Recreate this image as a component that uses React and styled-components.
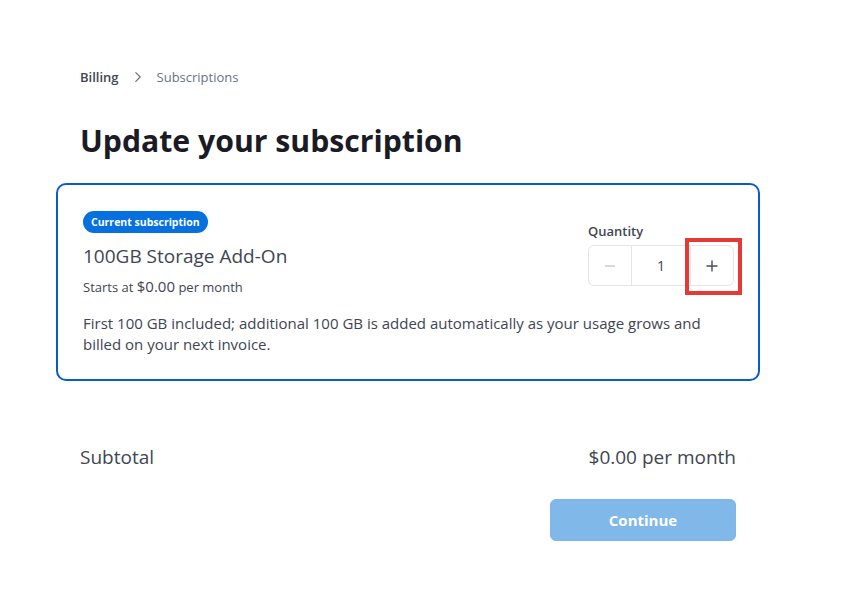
import React from "react";
import styled, { createGlobalStyle } from "styled-components";

const GlobalStyle = createGlobalStyle`
  body {
    margin: 0;
    background: #ffffff;
    font-family: "Open Sans", "Noto Sans", sans-serif;
    color: #30313d;
  }
`;

const App = () => {
  return (
    <>
      <GlobalStyle />
      <Page>
        <Breadcrumbs>
          <Crumb $active>Billing</Crumb>
          <Chevron viewBox="0 0 16 16">
            <path d="M5.5 3l5 5-5 5" fill="none" stroke="#6b7280" strokeWidth="1.4" strokeLinecap="round" strokeLinejoin="round" />
          </Chevron>
          <Crumb>Subscriptions</Crumb>
        </Breadcrumbs>
        <Title>Update your subscription</Title>
        <Card>
          <CardMain>
            <Badge>Current subscription</Badge>
            <PlanName>100GB Storage Add-On</PlanName>
            <Price>
              Starts at <Amount>$0.00</Amount> per month
            </Price>
          </CardMain>
          <QuantityBox>
            <QuantityLabel>Quantity</QuantityLabel>
            <Stepper>
              <StepButton disabled>
                <svg width="14" height="14" viewBox="0 0 14 14">
                  <path d="M2 7h10" stroke="#c4c7ce" strokeWidth="1.4" />
                </svg>
              </StepButton>
              <StepValue>1</StepValue>
              <StepButton $last>
                <svg width="14" height="14" viewBox="0 0 14 14">
                  <path d="M1.5 7h11M7 1.5v11" stroke="#4a4d5a" strokeWidth="1.4" />
                </svg>
                <Highlight />
              </StepButton>
            </Stepper>
          </QuantityBox>
          <Description>
            First 100 GB included; additional 100 GB is added automatically as your usage grows and
            billed on your next invoice.
          </Description>
        </Card>
        <SubtotalRow>
          <span>Subtotal</span>
          <span>$0.00 per month</span>
        </SubtotalRow>
        <Actions>
          <ContinueButton disabled>Continue</ContinueButton>
        </Actions>
      </Page>
    </>
  );
};

export default App;

const Page = styled.div`
  width: 656px;
  padding: 66px 0 0 80px;
`;

const Breadcrumbs = styled.nav`
  display: flex;
  align-items: center;
  gap: 12px;
  height: 22px;
`;

const Crumb = styled.span`
  font-size: 13px;
  font-weight: ${(p) => (p.$active ? 600 : 400)};
  color: ${(p) => (p.$active ? "#414552" : "#687385")};
`;

const Chevron = styled.svg`
  width: 14px;
  height: 14px;
`;

const Title = styled.h1`
  margin: 33px 0 0;
  font-size: 30.2px;
  line-height: 40px;
  font-weight: 700;
  color: #1a1b25;
`;

const Card = styled.div`
  margin: 22px 0 0 -24px;
  width: 704px;
  box-sizing: border-box;
  border: 2px solid #0b5cc7;
  border-radius: 10px;
  padding: 26px 24px 24px 25px;
  display: grid;
  grid-template-columns: 1fr auto;
  row-gap: 17px;
`;

const CardMain = styled.div`
  display: flex;
  flex-direction: column;
  align-items: flex-start;
`;

const Badge = styled.span`
  background: #0570de;
  color: #ffffff;
  font-size: 10.5px;
  font-weight: 700;
  line-height: 16px;
  padding: 3px 8px;
  border-radius: 12px;
`;

const PlanName = styled.div`
  margin-top: 10px;
  font-size: 19px;
  line-height: 26px;
  color: #414552;
`;

const Price = styled.div`
  margin-top: 8px;
  font-size: 13px;
  line-height: 18px;
  color: #414552;
`;

const Amount = styled.span`
  font-size: 15px;
`;

const QuantityBox = styled.div`
  margin-top: 11px;
  display: flex;
  flex-direction: column;
  gap: 5px;
`;

const QuantityLabel = styled.div`
  font-size: 13px;
  font-weight: 600;
  color: #414552;
  line-height: 18px;
`;

const Stepper = styled.div`
  display: flex;
  width: 146px;
  height: 41px;
  border: 1px solid #e3e5ea;
  border-radius: 6px;
  box-sizing: border-box;
`;

const StepButton = styled.button`
  position: relative;
  width: 43px;
  border: none;
  background: transparent;
  display: grid;
  place-items: center;
  padding: 0;
  ${(p) => (p.$last ? "border-left: 1px solid #e3e5ea;" : "border-right: 1px solid #e3e5ea;")}
`;

const StepValue = styled.div`
  flex: 1;
  display: grid;
  place-items: center;
  font-size: 14px;
  color: #414552;
`;

const Highlight = styled.span`
  position: absolute;
  left: -6px;
  top: -8px;
  width: 57px;
  height: 57px;
  box-sizing: border-box;
  border: 4px solid #e53935;
  pointer-events: none;
`;

const Description = styled.p`
  grid-column: 1 / -1;
  max-width: 640px;
  margin: 0;
  font-size: 15px;
  line-height: 21px;
  color: #414552;
`;

const SubtotalRow = styled.div`
  margin-top: 63px;
  display: flex;
  justify-content: space-between;
  font-size: 19px;
  line-height: 26px;
  color: #414552;
`;

const Actions = styled.div`
  margin-top: 29px;
  display: flex;
  justify-content: flex-end;
`;

const ContinueButton = styled.button`
  width: 186px;
  height: 42px;
  border: 1px solid #7fb4e8;
  border-radius: 6px;
  background: #80b8ea;
  color: #ffffff;
  font-family: inherit;
  font-size: 15px;
  font-weight: 700;
`;
